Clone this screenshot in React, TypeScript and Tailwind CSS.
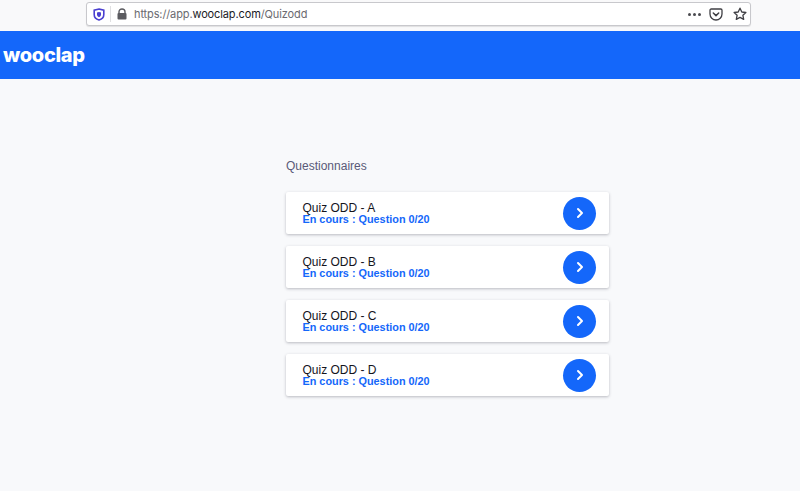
import { ChevronRight } from "lucide-react";

const quizzes = ["A", "B", "C", "D"];

function BrowserBar() {
  return (
    <div className="h-[31px] bg-[#f9f9fa] pt-[2px] pl-[86px] pr-[49px]">
      <div className="h-[24px] bg-white border border-[#c8c8cc] rounded-[3px] flex items-center pl-[6px] pr-[3px] shadow-[0_1px_1px_rgba(0,0,0,0.1)]">
        <svg width="12" height="13" viewBox="0 0 12 13" className="shrink-0">
          <path d="M6 1 L10.8 2.2 V6.5 C10.8 9.5 8.5 11.3 6 12 C3.5 11.3 1.2 9.5 1.2 6.5 V2.2 Z" fill="none" stroke="#4a3fd0" strokeWidth="1.6" />
          <path d="M6 4 L8 4.6 V6.5 C8 8 7 8.8 6 9.2 C5 8.8 4 8 4 6.5 V4.6 Z" fill="#4a3fd0" />
        </svg>
        <div className="w-px h-[16px] bg-[#e0e0e2] ml-[5px] mr-[5px]" />
        <svg width="12" height="12" viewBox="0 0 12 12" className="shrink-0">
          <path d="M3 5.5 V3.8 C3 2 4.3 1 6 1 C7.7 1 9 2 9 3.8 V5.5" fill="none" stroke="#5b5b60" strokeWidth="1.4" />
          <rect x="1.5" y="5" width="9" height="6.5" rx="1" fill="#5b5b60" />
        </svg>
        <div className="ml-[6px] text-[11px] tracking-[-0.12px] text-[#6b6b70] font-['Inter',sans-serif] whitespace-nowrap">
          https://app.<span className="text-[#1b1b1f]">wooclap.com</span>/Quizodd
        </div>
        <div className="ml-auto flex items-center gap-[2px] mr-[8px]">
          <span className="w-[3px] h-[3px] rounded-full bg-[#4a4a4f]" />
          <span className="w-[3px] h-[3px] rounded-full bg-[#4a4a4f]" />
          <span className="w-[3px] h-[3px] rounded-full bg-[#4a4a4f]" />
        </div>
        <svg width="14" height="13" viewBox="0 0 14 13" className="shrink-0 mr-[10px]">
          <path d="M2.2 1 H11.8 C12.5 1 13 1.5 13 2.2 V6 C13 9.3 10.3 12 7 12 C3.7 12 1 9.3 1 6 V2.2 C1 1.5 1.5 1 2.2 1 Z" fill="none" stroke="#3f3f44" strokeWidth="1.3" />
          <path d="M4.3 5 L7 7.6 L9.7 5" fill="none" stroke="#3f3f44" strokeWidth="1.5" strokeLinecap="round" strokeLinejoin="round" />
        </svg>
        <svg width="14" height="14" viewBox="0 0 14 14" className="shrink-0">
          <path d="M7 1.2 L8.8 5 L12.9 5.5 L9.9 8.3 L10.7 12.4 L7 10.4 L3.3 12.4 L4.1 8.3 L1.1 5.5 L5.2 5 Z" fill="none" stroke="#3f3f44" strokeWidth="1.3" strokeLinejoin="round" />
        </svg>
      </div>
    </div>
  );
}

function QuizCard({ letter }: { letter: string }) {
  return (
    <div className="h-[42px] bg-white rounded-[2px] shadow-[0_1px_3px_rgba(40,40,60,0.3)] flex items-center pl-[16.5px] pr-[13px]">
      <div className="flex-1 mt-[1px]">
        <div className="text-[12px] leading-[11px] text-[#14141c]">Quiz ODD - {letter}</div>
        <div className="text-[10.85px] leading-[11px] font-bold text-[#1467fa]">En cours : Question 0/20</div>
      </div>
      <div className="w-[33px] h-[33px] rounded-full bg-[#1467fa] flex items-center justify-center">
        <ChevronRight size={16} strokeWidth={3} className="text-white" />
      </div>
    </div>
  );
}

export default function App() {
  return (
    <div className="w-[800px] h-[491px] overflow-hidden bg-[#f8f9fb] font-['Liberation_Sans',Arial,sans-serif]">
      <BrowserBar />
      <header className="h-[48px] bg-[#1467fa] flex items-center pl-[3px]">
        <span className="text-white text-[20px] font-extrabold tracking-[-0.3px] font-['Inter',sans-serif]">wooclap</span>
      </header>
      <main className="w-[323px] ml-[286px] pt-[80px]">
        <h2 className="text-[12px] leading-[14px] text-[#5a5a78] mb-[19px]">Questionnaires</h2>
        <div className="flex flex-col gap-[12px]">
          {quizzes.map((q) => (
            <QuizCard key={q} letter={q} />
          ))}
        </div>
      </main>
    </div>
  );
}
